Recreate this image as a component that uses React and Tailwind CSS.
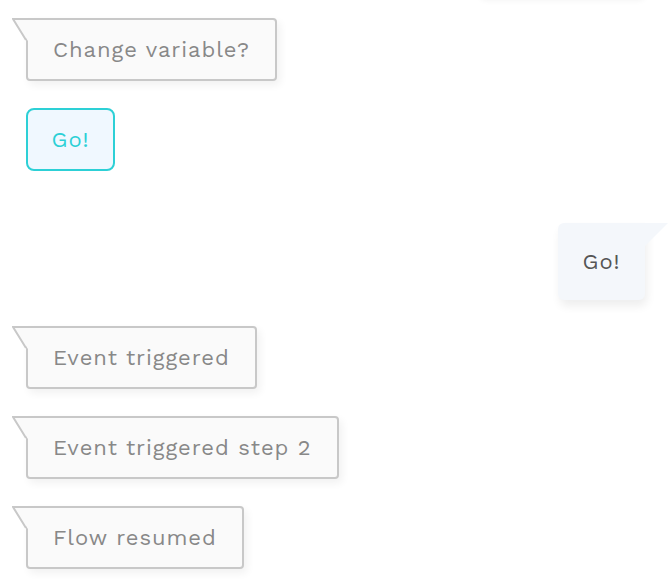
import React from "react";

function LeftBubble({ children }) {
  return (
    <div className="relative self-start">
      <svg className="absolute left-[-14px] top-0" width="16" height="24" viewBox="0 0 16 24">
        <polygon points="1,1 16,1 16,23" fill="#fafafa" />
        <polyline points="16,1 1,1 14,22" fill="none" stroke="#c8c8c8" strokeWidth="2" />
      </svg>
      <div className="h-[63px] flex items-center px-[25px] border-2 border-[#c8c8c8] bg-[#fafafa] rounded-[4px] rounded-tl-none text-[22px] tracking-[0.95px] text-[#888] shadow-[3px_4px_8px_rgba(0,0,0,0.06)]">
        {children}
      </div>
    </div>
  );
}

export default function App() {
  return (
    <div
      className="w-[672px] h-[588px] bg-white overflow-hidden flex flex-col items-start pl-[26px] pr-[27px]"
      style={{ fontFamily: '"Work Sans", "Open Sans", "Noto Sans", sans-serif' }}
    >
      <div className="self-end w-[165px] h-[40px] mt-[-42px] bg-[#f5f8fb] rounded-[6px] shadow-[0_2px_6px_rgba(0,0,0,0.06)]" />
      <div className="mt-[20px] flex">
        <LeftBubble>Change variable?</LeftBubble>
      </div>
      <div className="mt-[27px] flex">
        <div className="h-[63px] w-[89px] flex items-center justify-center border-2 border-[#2dd0d6] bg-[#f0f8ff] rounded-[8px] text-[22px] tracking-[0.9px] text-[#2dd0d6]">
          Go!
        </div>
      </div>
      <div className="mt-[52px] self-end relative">
        <div className="h-[77px] w-[87px] flex items-center justify-center bg-[#f4f7fb] rounded-[6px] rounded-tr-none text-[22px] tracking-[0.9px] text-[#555] shadow-[2px_6px_10px_rgba(0,0,0,0.07)]">
          Go!
        </div>
        <svg className="absolute right-[-23px] top-0" width="23" height="24" viewBox="0 0 23 24">
          <polygon points="0,0 23,0 0,23" fill="#f4f7fb" />
        </svg>
      </div>
      <div className="mt-[26px] flex">
        <LeftBubble>Event triggered</LeftBubble>
      </div>
      <div className="mt-[27px] flex">
        <LeftBubble>Event triggered step 2</LeftBubble>
      </div>
      <div className="mt-[27px] flex">
        <LeftBubble>Flow resumed</LeftBubble>
      </div>
    </div>
  );
}
